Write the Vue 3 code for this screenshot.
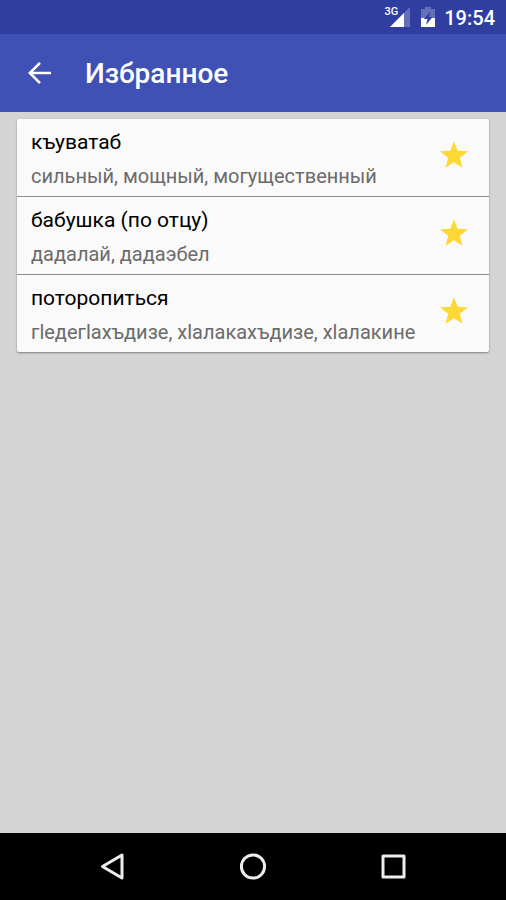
<script setup>
import { ref } from 'vue'

const favourites = ref([
  { word: 'къуватаб', translation: 'сильный, мощный, могущественный', starred: true },
  { word: 'бабушка (по отцу)', translation: 'дадалай, дадаэбел', starred: true },
  { word: 'поторопиться', translation: 'гlедегlахъдизе, хlалакахъдизе, хlалакине', starred: true },
])
</script>

<template>
  <div class="screen">
    <div class="status">
      <span class="network">3G</span>
      <svg class="signal" viewBox="0 0 20 20" aria-hidden="true">
        <path d="M0 20 20 0V20Z" fill="#6470b8" />
        <path d="M0 20 14 6V20Z" fill="#fff" />
      </svg>
      <svg class="battery" viewBox="0 0 14 20" aria-hidden="true">
        <path d="M4 0H10V2H14V11H0V2H4Z" fill="#6470b8" />
        <path d="M0 11H14V20H0Z" fill="#fff" />
        <path d="M9.500 4.500 3 12H6.500L5 18 11.500 10H8Z" fill="#303f9f" />
      </svg>
      <time class="clock">19:54</time>
    </div>

    <header class="bar">
      <button class="icon-button" type="button" aria-label="Назад">
        <svg class="arrow" viewBox="0 0 24 24" aria-hidden="true">
          <path d="M12 1.800 1.800 12 12 22.200M2 12H23" fill="none" stroke="#fff" stroke-width="2.600" />
        </svg>
      </button>
      <h1 class="title">Избранное</h1>
    </header>

    <main class="content">
      <ul class="card">
        <li v-for="item in favourites" :key="item.word" class="row">
          <div class="texts">
            <p class="word">{{ item.word }}</p>
            <p class="translation">{{ item.translation }}</p>
          </div>
          <button
            class="icon-button"
            type="button"
            aria-label="Избранное"
            :aria-pressed="item.starred"
            @click="item.starred = !item.starred"
          >
            <svg class="star" viewBox="2 2 20 19" aria-hidden="true">
              <path
                d="M12 2 14.600 8.900 22 9.240 16.200 13.900 18 21 12 17 6 21 7.800 13.900 2 9.240 9.400 8.900Z"
                :fill="item.starred ? '#fdd835' : '#bdbdbd'"
              />
            </svg>
          </button>
        </li>
      </ul>
    </main>

    <nav class="navigation">
      <button class="icon-button" type="button" aria-label="Назад">
        <svg class="nav-icon" viewBox="0 0 28 28" aria-hidden="true">
          <path d="M23 2V25L3.500 13.500Z" />
        </svg>
      </button>
      <button class="icon-button" type="button" aria-label="Домой">
        <svg class="nav-icon" viewBox="0 0 28 28" aria-hidden="true">
          <circle cx="14" cy="13.500" r="11.600" />
        </svg>
      </button>
      <button class="icon-button" type="button" aria-label="Недавние">
        <svg class="nav-icon" viewBox="0 0 28 28" aria-hidden="true">
          <rect x="4" y="3" width="21" height="21" />
        </svg>
      </button>
    </nav>
  </div>
</template>

<style>
body {
  margin: 0;
}
</style>

<style scoped>
.screen {
  display: flex;
  flex-direction: column;
  min-height: 100vh;
  background: #d4d4d4;
  font-family: Roboto, "Noto Sans", sans-serif;
}

.status {
  display: flex;
  align-items: center;
  justify-content: flex-end;
  height: 34px;
  padding-right: 11px;
  background: #303f9f;
  color: #fff;
}

.network {
  align-self: flex-start;
  padding-top: 6px;
  margin-right: -8px;
  font-size: 11px;
  line-height: 12px;
  font-weight: 500;
}

.signal {
  width: 20px;
  height: 20px;
}

.battery {
  width: 14px;
  height: 20px;
  margin: 0 9px 0 11px;
}

.clock {
  padding-top: 1px;
  font-size: 20px;
  line-height: 24px;
  font-weight: 500;
}

.bar {
  display: flex;
  align-items: center;
  gap: 33px;
  height: 78px;
  padding: 0 28px;
  background: #3f51b5;
}

.icon-button {
  display: flex;
  align-items: center;
  justify-content: center;
  padding: 0;
  border: 0;
  background: none;
  cursor: pointer;
}

.arrow {
  width: 24px;
  height: 24px;
}

.title {
  margin: 0;
  padding-top: 2px;
  color: #fff;
  font-size: 28px;
  line-height: 34px;
  font-weight: 500;
}

.content {
  flex: 1;
  padding: 7px 17px;
}

.card {
  margin: 0;
  padding: 0;
  list-style: none;
  background: #fafafa;
  border-radius: 2px;
  box-shadow: 0 1px 2px rgba(0, 0, 0, 0.4);
}

.row {
  display: flex;
  align-items: flex-start;
  justify-content: space-between;
  padding: 9px 21px 6px 14px;
}

.row + .row {
  border-top: 1px solid #8c8c8c;
}

.row .icon-button {
  padding-top: 13px;
}

.word,
.translation {
  margin: 0;
}

.word {
  color: #000;
  font-size: 21px;
  line-height: 28px;
}

.translation {
  padding-top: 6px;
  color: #6b6b6b;
  font-size: 20px;
  line-height: 28px;
}

.star {
  width: 28px;
  height: 27px;
}

.navigation {
  display: flex;
  justify-content: center;
  height: 67px;
  background: #000;
}

.navigation .icon-button {
  width: 140px;
}

.nav-icon {
  width: 28px;
  height: 28px;
  fill: none;
  stroke: #eee;
  stroke-width: 3;
  stroke-linejoin: round;
}
</style>
